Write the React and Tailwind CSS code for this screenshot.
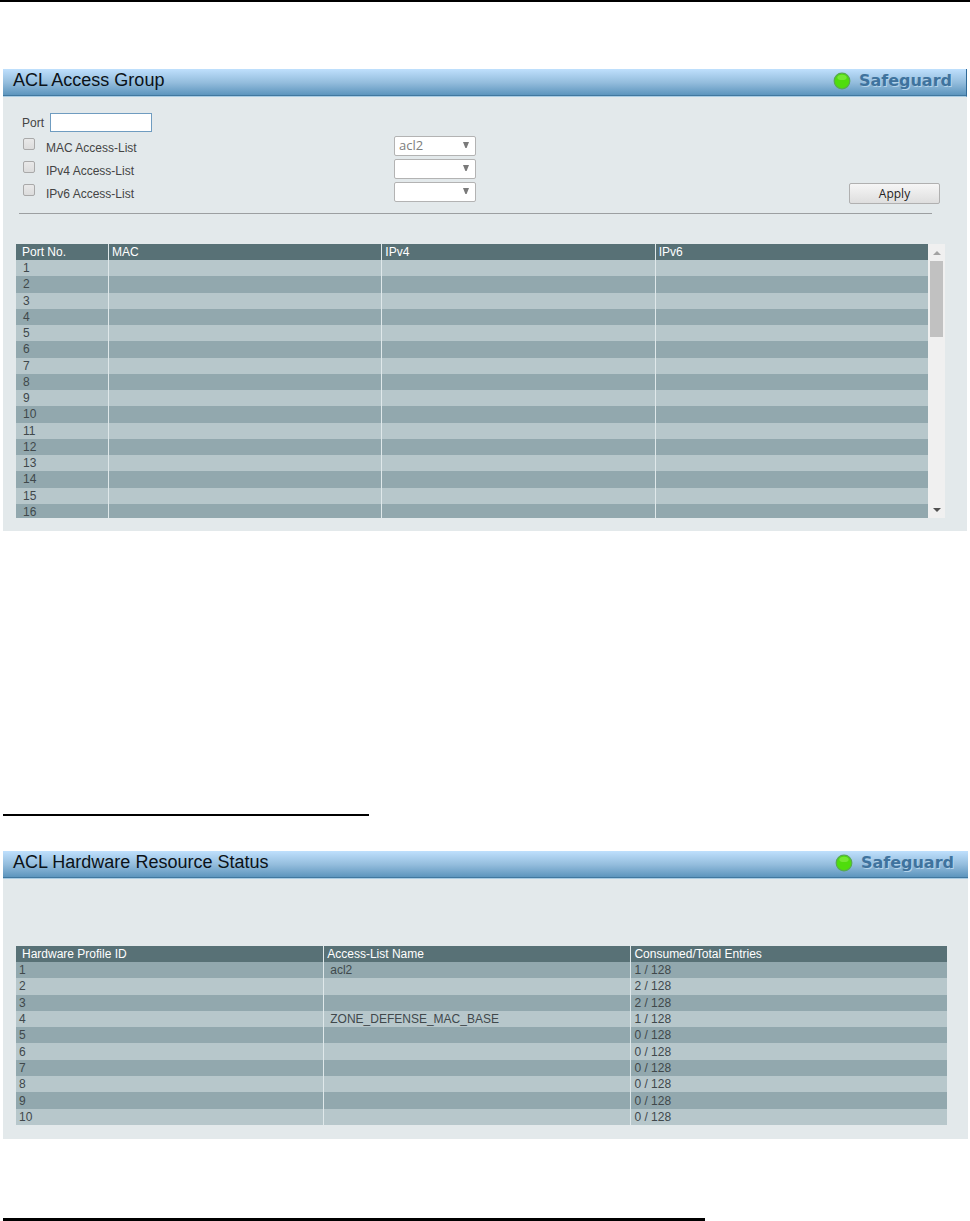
import React from 'react';

const ports = Array.from({ length: 16 }, (_, i) => i + 1);

const accessLists = [
  { id: 'mac', label: 'MAC Access-List', options: ['acl2'] },
  { id: 'ipv4', label: 'IPv4 Access-List', options: [''] },
  { id: 'ipv6', label: 'IPv6 Access-List', options: [''] },
];

const profiles = [
  { id: 1, name: 'acl2', entries: '1 / 128' },
  { id: 2, name: '', entries: '2 / 128' },
  { id: 3, name: '', entries: '2 / 128' },
  { id: 4, name: 'ZONE_DEFENSE_MAC_BASE', entries: '1 / 128' },
  { id: 5, name: '', entries: '0 / 128' },
  { id: 6, name: '', entries: '0 / 128' },
  { id: 7, name: '', entries: '0 / 128' },
  { id: 8, name: '', entries: '0 / 128' },
  { id: 9, name: '', entries: '0 / 128' },
  { id: 10, name: '', entries: '0 / 128' },
];

const PanelHeader = ({ title, className = '' }) => (
  <header
    className={`flex h-7 items-start justify-between border-b border-[#a9cce3] bg-linear-to-b from-[#bfe0fd] via-[#94bddd] to-[#5892bb] pl-2.5 pr-3.5 shadow-[inset_0_-1px_0_#41789f] ${className}`}
  >
    <h2 className="text-[18px] leading-[22px] text-[#0b1218]">{title}</h2>
    <div className="flex h-6 items-center gap-2">
      <svg width="18" height="18" viewBox="0 0 18 18" aria-hidden="true">
        <circle cx="9" cy="9" r="7.8" fill="#4fdd0c" stroke="#58ab4e" strokeWidth="1.2" />
        <ellipse cx="9" cy="5.4" rx="4.6" ry="2.6" fill="#8df04f" opacity="0.6" />
      </svg>
      <span className="font-['DejaVu_Sans'] text-[16px] font-bold leading-6 text-[#3f739e] [text-shadow:1px_1px_0_#b4d3ea]">
        Safeguard
      </span>
    </div>
  </header>
);

const AccessListRow = ({ id, label, options }) => (
  <div className="flex h-[19px] items-center">
    <label htmlFor={id} className="flex w-[372px] items-start pl-px">
      <input
        id={id}
        type="checkbox"
        className="mr-[11px] mt-0.5 size-3 appearance-none rounded-[2px] border border-[#a9a9a9] bg-linear-to-b from-[#e9e9e9] to-[#dcdcdc]"
      />
      <span className="pt-1">{label}</span>
    </label>
    <div className="relative">
      <select
        aria-label={label}
        disabled
        className="block h-5 w-[82px] appearance-none rounded-[2px] border border-[#b3b3b3] bg-white pl-1 font-['Open_Sans'] text-[13px] leading-[17px] text-[#7d7d7d]"
      >
        {options.map((option) => (
          <option key={option}>{option}</option>
        ))}
      </select>
      <svg
        className="pointer-events-none absolute right-[7px] top-1.5"
        width="6"
        height="6"
        viewBox="0 0 6 6"
        aria-hidden="true"
      >
        <path d="M0 0h6L3.6 6H2.4z" fill="#7a7a7a" />
      </svg>
    </div>
  </div>
);

const Scrollbar = () => (
  <div className="flex w-[17px] flex-col items-center bg-[#f0f0f0]">
    <button type="button" aria-label="Scroll up" className="flex h-[17px] w-full items-center justify-center">
      <svg width="8" height="4" viewBox="0 0 8 4" aria-hidden="true">
        <path d="M4 0l4 4H0z" fill="#a3a3a3" />
      </svg>
    </button>
    <div className="h-[76px] w-[13px] bg-[#c1c1c1]" />
    <button type="button" aria-label="Scroll down" className="mt-auto flex h-[17px] w-full items-center justify-center">
      <svg width="8" height="4" viewBox="0 0 8 4" aria-hidden="true">
        <path d="M0 0h8L4 4z" fill="#505050" />
      </svg>
    </button>
  </div>
);

const AccessGroupPanel = () => (
  <section className="ml-[3px] mr-[3px] mt-[67px] bg-[#e3e9eb] pb-[13px]">
    <PanelHeader title="ACL Access Group" className="border-r border-r-[#2f6a98]" />

    <form className="flex items-end justify-between pl-[19px] pr-[27px] pt-4" onSubmit={(e) => e.preventDefault()}>
      <div className="flex flex-col gap-1 pb-[3px] text-[#444]">
        <div className="flex h-[19px] items-center">
          <label htmlFor="port" className="w-7">Port</label>
          <input id="port" type="text" className="h-[19px] w-[102px] border border-[#6f9cc0] bg-white px-1" />
        </div>
        {accessLists.map((list) => (
          <AccessListRow key={list.id} {...list} />
        ))}
      </div>
      <button
        type="submit"
        className="h-[21px] w-[91px] rounded-[2px] border border-[#b0b0b0] bg-linear-to-b from-[#f6f6f6] to-[#dedede] font-['Open_Sans'] text-[12px] leading-[19px] text-[#222]"
      >
        Apply
      </button>
    </form>

    <hr className="ml-4 mr-[35px] mt-[9px] border-t border-[#9c9fa1]" />

    <div className="ml-[13px] mr-[22px] mt-[30px] flex h-[274px] overflow-hidden">
      <div className="flex-1">
        <table className="h-[276px] w-full table-fixed border-separate border-spacing-0 text-left leading-4">
          <thead>
            <tr className="bg-[#587176] text-white">
              <th className="w-[92px] p-0 pl-1.5 font-normal">Port No.</th>
              <th className="border-l border-[#dfe8ea] p-0 pl-[3px] font-normal">MAC</th>
              <th className="border-l border-[#dfe8ea] p-0 pl-[3px] font-normal">IPv4</th>
              <th className="border-l border-[#dfe8ea] p-0 pl-[3px] font-normal">IPv6</th>
            </tr>
          </thead>
          <tbody className="text-[#40484b]">
            {ports.map((port) => (
              <tr key={port} className="odd:bg-[#b7c7cb] even:bg-[#92a8ae]">
                <td className="p-0 pl-[7px]">{port}</td>
                <td className="border-l border-[#dfe8ea] p-0" />
                <td className="border-l border-[#dfe8ea] p-0" />
                <td className="border-l border-[#dfe8ea] p-0" />
              </tr>
            ))}
          </tbody>
        </table>
      </div>
      <Scrollbar />
    </div>
  </section>
);

const HardwareStatusPanel = () => (
  <section className="ml-[3px] mr-0.5 mt-[35px] bg-[#e3e9eb] pb-[14px]">
    <PanelHeader title="ACL Hardware Resource Status" />

    <div className="ml-[13px] mr-[21px] pt-[67px]">
      <table className="h-[179px] w-full table-fixed border-separate border-spacing-0 text-left leading-4">
        <thead>
          <tr className="bg-[#587176] text-white">
            <th className="w-[33%] p-0 pl-1.5 font-normal">Hardware Profile ID</th>
            <th className="w-[33%] border-l border-[#dfe8ea] p-0 pl-[3px] font-normal">Access-List Name</th>
            <th className="border-l border-[#dfe8ea] p-0 pl-[3px] font-normal">Consumed/Total Entries</th>
          </tr>
        </thead>
        <tbody className="text-[#40484b]">
          {profiles.map((profile) => (
            <tr key={profile.id} className="odd:bg-[#92a8ae] even:bg-[#b7c7cb]">
              <td className="p-0 pl-[3px]">{profile.id}</td>
              <td className="border-l border-[#dfe8ea] p-0 pl-1.5">{profile.name}</td>
              <td className="border-l border-[#dfe8ea] p-0 pl-[3px]">{profile.entries}</td>
            </tr>
          ))}
        </tbody>
      </table>
    </div>
  </section>
);

const App = () => (
  <main className="border-t-2 border-black bg-white font-['Liberation_Sans',Arial,sans-serif] text-[12px] leading-4">
    <AccessGroupPanel />
    <div className="ml-[3px] mt-[283px] h-0.5 w-[366px] bg-black" />
    <HardwareStatusPanel />
    <div className="ml-[3px] mt-[79px] h-[3px] w-[702px] bg-black" />
  </main>
);

export default App;
